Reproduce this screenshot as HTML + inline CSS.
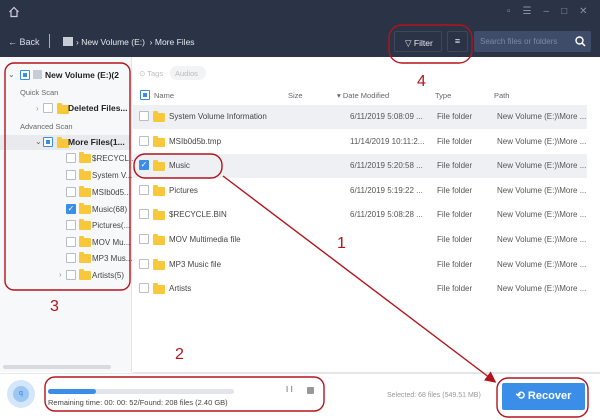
<!DOCTYPE html>
<html><head><meta charset="utf-8"><style>
*{margin:0;padding:0;box-sizing:border-box}
body{width:600px;height:420px;overflow:hidden;background:#fff;font-family:"Liberation Sans",sans-serif;position:relative;color:#333}
.a{position:absolute;white-space:nowrap}
.dark{background:#2b3447}
.cb{position:absolute;width:10px;height:10px;border:1px solid #b8bcc4;background:#fff;border-radius:1px}
.cbf{background:#3b8ee8;border-color:#3b8ee8}
.fold{position:absolute;width:12px;height:9px;background:#f8c83a;border-radius:1px}
.fold:before{content:"";position:absolute;left:0;top:-2px;width:5px;height:3px;background:#f8c83a;border-radius:1px 1px 0 0}
.t{font-size:8px;color:#444}
.l{font-size:8px;color:#444}
.g{font-size:7.5px;color:#666}
</style></head><body>
<div class="a dark" style="left:0;top:0;width:600px;height:57px"></div>
<svg class="a" style="left:8px;top:6px" width="12" height="12" viewBox="0 0 12 12"><path d="M1.5 6 L6 1.5 L10.5 6 M3 5 V10.5 H9 V5" fill="none" stroke="#ccd" stroke-width="1.2"/></svg>
<div class="a" style="left:507px;top:6px;font-size:10px;color:#8891a3;letter-spacing:12px">▫☰–□✕</div>
<div class="a" style="left:8px;top:37px;font-size:9px;color:#dde">&#8592; Back</div>
<div class="a" style="left:49px;top:34px;width:1px;height:14px;background:#aab"></div>
<div class="a" style="left:63px;top:37px;width:10px;height:9px;background:#c7ccd6"></div>
<div class="a" style="left:76px;top:37px;font-size:8.5px;color:#e4e6ec">› New Volume (E:) &nbsp;› More Files</div>
<div class="a" style="left:394px;top:31px;width:48px;height:21px;border:1px solid #3e485c;border-radius:2px;color:#e8eaf0;font-size:8.5px;padding:6px 0 0 10px">▽ Filter</div>
<div class="a" style="left:447px;top:31px;width:21px;height:21px;border:1px solid #3e485c;border-radius:2px;color:#e8eaf0;font-size:9px;text-align:center;line-height:19px">≡</div>
<div class="a" style="left:474px;top:31px;width:117px;height:21px;background:#3f4c69;border-radius:2px;color:#7d89a3;font-size:8px;padding:6px 0 0 6px">Search files or folders</div>
<svg class="a" style="left:575px;top:36px" width="11" height="11" viewBox="0 0 11 11"><circle cx="4.5" cy="4.5" r="3.5" fill="none" stroke="#fff" stroke-width="1.4"/><path d="M7 7 L10 10" stroke="#fff" stroke-width="1.5"/></svg>
<!-- left panel -->
<div class="a" style="left:0;top:57px;width:132px;height:315px;background:#f7f8fa;border-right:1px solid #e2e4e8"></div>
<div class="a" style="left:0;top:135px;width:132px;height:15px;background:#e8eaee"></div>
<div class="a" style="left:8px;top:70px;font-size:8px;color:#666">⌄</div>
<div class="cb" style="left:20px;top:70px;border-color:#3b8ee8"><div style="margin:2px;width:4px;height:4px;background:#3b8ee8"></div></div>
<div class="a" style="left:33px;top:70px;width:9px;height:9px;background:#c7ccd6"></div>
<div class="a" style="left:45px;top:70px;font-size:8.5px;font-weight:bold;color:#222">New Volume (E:)(2</div>
<div class="a g" style="left:20px;top:88px">Quick Scan</div>
<div class="a" style="left:36px;top:104px;font-size:8px;color:#999">›</div>
<div class="cb" style="left:43px;top:103px"></div>
<div class="fold" style="left:57px;top:105px"></div>
<div class="a" style="left:68px;top:103px;font-size:8.5px;font-weight:bold;color:#222">Deleted Files...</div>
<div class="a g" style="left:20px;top:122px">Advanced Scan</div>
<div class="a" style="left:35px;top:137px;font-size:8px;color:#666">⌄</div>
<div class="cb" style="left:43px;top:137px;border-color:#3b8ee8"><div style="margin:2px;width:4px;height:4px;background:#3b8ee8"></div></div>
<div class="fold" style="left:57px;top:139px"></div>
<div class="a" style="left:68px;top:137px;font-size:8.5px;font-weight:bold;color:#222">More Files(1...</div>
<div class="cb" style="left:66px;top:153px"></div><div class="fold" style="left:79px;top:154px"></div><div class="a l" style="left:92px;top:154px">$RECYCL...</div>
<div class="cb" style="left:66px;top:170px"></div><div class="fold" style="left:79px;top:171px"></div><div class="a l" style="left:92px;top:171px">System V...</div>
<div class="cb" style="left:66px;top:187px"></div><div class="fold" style="left:79px;top:188px"></div><div class="a l" style="left:92px;top:188px">MSIb0d5...</div>
<div class="cb cbf" style="left:66px;top:204px;color:#fff;font-size:8px;line-height:8px;text-align:center">✓</div><div class="fold" style="left:79px;top:205px"></div><div class="a l" style="left:92px;top:205px">Music(68)</div>
<div class="cb" style="left:66px;top:220px"></div><div class="fold" style="left:79px;top:221px"></div><div class="a l" style="left:92px;top:221px">Pictures(...</div>
<div class="cb" style="left:66px;top:237px"></div><div class="fold" style="left:79px;top:238px"></div><div class="a l" style="left:92px;top:238px">MOV Mu...</div>
<div class="cb" style="left:66px;top:253px"></div><div class="fold" style="left:79px;top:254px"></div><div class="a l" style="left:92px;top:254px">MP3 Mus...</div>
<div class="a" style="left:59px;top:270px;font-size:8px;color:#999">›</div>
<div class="cb" style="left:66px;top:270px"></div><div class="fold" style="left:79px;top:271px"></div><div class="a l" style="left:92px;top:271px">Artists(5)</div>
<div class="a" style="left:3px;top:365px;width:108px;height:4px;background:#d8dadf;border-radius:2px"></div>
<!-- list -->
<div class="a" style="left:139px;top:69px;font-size:7.5px;color:#bbb">⊙ Tags</div>
<div class="a" style="left:170px;top:66px;width:36px;height:14px;background:#f2f3f5;border-radius:7px;font-size:7.5px;color:#bbb;padding:3px 0 0 5px">Audios</div>
<div class="cb" style="left:140px;top:90px;border-color:#3b8ee8"><div style="margin:2px;width:4px;height:4px;background:#3b8ee8"></div></div>
<div class="a g" style="left:154px;top:91px">Name</div>
<div class="a g" style="left:288px;top:91px">Size</div>
<div class="a g" style="left:337px;top:91px">▾ Date Modified</div>
<div class="a g" style="left:435px;top:91px">Type</div>
<div class="a g" style="left:494px;top:91px">Path</div>
<div class="a" style="left:133px;top:105px;width:454px;height:24px;background:#eef0f4"></div>
<div class="a" style="left:133px;top:154px;width:454px;height:24px;background:#eef0f4"></div>
<div id="rows"></div>
<div class="a" style="left:133px;top:372px;width:467px;height:1px;background:#e2e4e8"></div>
<!-- bottom -->
<div class="a" style="left:0;top:373px;width:600px;height:47px;background:#fff;border-top:1px solid #e6e8ec"></div>
<div class="a" style="left:7px;top:380px;width:28px;height:28px;border-radius:50%;background:#d4e6fa"></div>
<div class="a" style="left:13px;top:386px;width:16px;height:16px;border-radius:50%;background:#9cc6f3;color:#2f7fd8;font-size:7px;text-align:center;line-height:16px">q</div>
<div class="a" style="left:48px;top:389px;width:186px;height:5px;background:#e3e5ea;border-radius:3px"></div>
<div class="a" style="left:48px;top:389px;width:48px;height:5px;background:#3b8ee8;border-radius:3px"></div>
<div class="a" style="left:286px;top:385px;font-size:8px;color:#999;font-weight:bold">I I</div>
<div class="a" style="left:307px;top:387px;width:7px;height:7px;background:#999;border-radius:1px"></div>
<div class="a" style="left:48px;top:398px;font-size:7.5px;color:#444">Remaining time: 00: 00: 52/Found: 208 files (2.40 GB)</div>
<div class="a" style="left:387px;top:392px;font-size:7px;color:#999">Selected: 68 files (549.51 MB)</div>
<div class="a" style="left:502px;top:383px;width:83px;height:27px;background:#3b8ee8;border-radius:2px;color:#fff;font-size:11px;font-weight:bold;text-align:center;line-height:27px">⟲ Recover</div>
<!-- annotations -->
<svg class="a" style="left:0;top:0" width="600" height="420">
<defs><marker id="ar" markerWidth="8" markerHeight="8" refX="6" refY="4" orient="auto"><path d="M0 0 L8 4 L0 8z" fill="#b3141c"/></marker></defs>
<g fill="none" stroke="#b3141c" stroke-width="1.4">
<rect x="5" y="63" width="125" height="227" rx="9"/>
<rect x="389" y="25" width="83" height="38" rx="13"/>
<rect x="134" y="154" width="88" height="24" rx="11"/>
<rect x="45" y="377" width="279" height="34" rx="10"/>
<rect x="497" y="378" width="91" height="39" rx="11"/>
<path d="M223 176 L494 381" marker-end="url(#ar)"/>
</g>
<g fill="#b3141c" font-family="Liberation Sans" font-size="16"><text x="417" y="86">4</text><text x="337" y="248">1</text><text x="50" y="311">3</text><text x="175" y="359">2</text></g>
</svg>
<script>
var r=[["System Volume Information","6/11/2019 5:08:09 ..."],["MSIb0d5b.tmp","11/14/2019 10:11:2..."],["Music","6/11/2019 5:20:58 ..."],["Pictures","6/11/2019 5:19:22 ..."],["$RECYCLE.BIN","6/11/2019 5:08:28 ..."],["MOV Multimedia file",""],["MP3 Music file",""],["Artists",""]];
var h="";r.forEach(function(x,i){var y=111+i*24.6;var ty=y+1;var c=i==2?'cb cbf" style="color:#fff;font-size:8px;line-height:8px;text-align:center;left:139px;top:'+y+'px">✓':'cb" style="left:139px;top:'+y+'px">';
h+='<div class="'+c+'</div><div class="fold" style="left:153px;top:'+(y+2)+'px"></div><div class="a t" style="left:169px;top:'+ty+'px">'+x[0]+'</div><div class="a t" style="left:350px;top:'+ty+'px;color:#555">'+x[1]+'</div><div class="a t" style="left:437px;top:'+ty+'px;color:#555">File folder</div><div class="a t" style="left:497px;top:'+ty+'px;color:#555">New Volume (E:)\\More ...</div>';});
document.getElementById("rows").innerHTML=h;
</script>
</body></html>
